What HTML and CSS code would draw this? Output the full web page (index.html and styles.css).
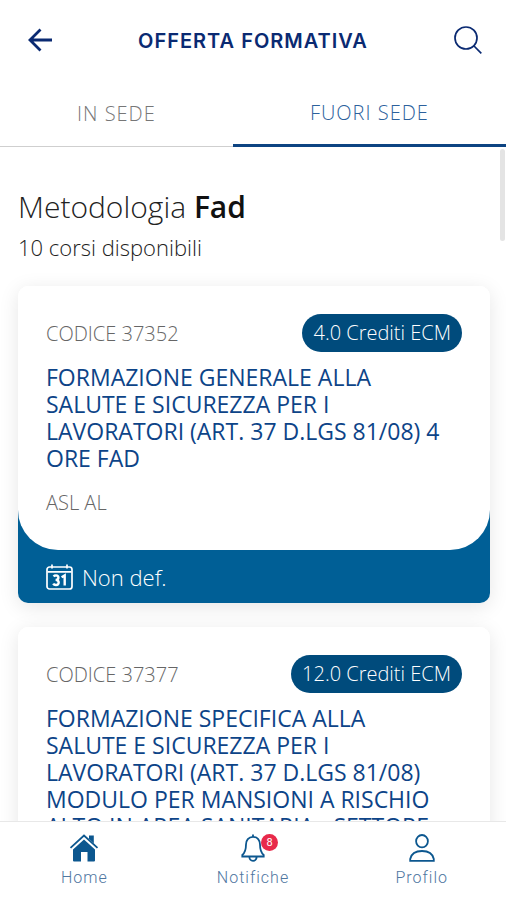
FILE: index.html
```html
<!DOCTYPE html>
<html lang="it">
<head>
    <meta charset="UTF-8">
    <meta name="viewport" content="width=device-width, initial-scale=1.0">
    <title>Offerta formativa</title>
    <link rel="stylesheet" href="styles.css">
</head>
<body>
    <header class="topbar">
        <button class="icon-btn" aria-label="Indietro">
            <svg width="28" height="28" viewBox="0 0 28 28" fill="none" stroke="currentColor" stroke-width="2.8">
                <path d="M28 14H6M16.5 3.5L6 14L16.5 24.5"/>
            </svg>
        </button>
        <h1 class="topbar-title">OFFERTA FORMATIVA</h1>
        <button class="icon-btn" aria-label="Cerca">
            <svg width="28" height="28" viewBox="0 0 28 28" fill="none" stroke="currentColor" stroke-width="1.7">
                <circle cx="12" cy="12" r="11"/>
                <path d="M19.5 19.5L27.3 27.3"/>
            </svg>
        </button>
    </header>

    <nav class="tabs">
        <a class="tab" href="#in-sede">IN SEDE</a>
        <a class="tab active" href="#fuori-sede">FUORI SEDE</a>
    </nav>

    <div class="content">
        <span class="scroll-thumb"></span>
        <main class="course-list" id="fuori-sede">
            <h2 class="list-title">Metodologia <b>Fad</b></h2>
            <p class="list-count">10 corsi disponibili</p>

            <article class="card">
                <div class="card-body">
                    <div class="card-head">
                        <span class="code">CODICE 37352</span>
                        <span class="credits">4.0 Crediti ECM</span>
                    </div>
                    <h3 class="course-title">FORMAZIONE GENERALE ALLA SALUTE E SICUREZZA PER I LAVORATORI (ART. 37 D.LGS 81/08) 4 ORE FAD</h3>
                    <p class="organizer">ASL AL</p>
                </div>
                <div class="card-footer">
                    <svg width="27" height="26" viewBox="0 0 27 26" fill="none" stroke="currentColor" stroke-width="1.7">
                        <rect x="1" y="3" width="25" height="22" rx="2.5"/>
                        <path d="M1.5 7.8H25.5M6 0.5V4.5M21 0.5V4.5"/>
                        <path d="M7.6 12.4Q8.4 11.4 10 11.4Q12.4 11.5 12.4 13.7Q12.3 15.9 9.6 15.9Q12.7 16 12.7 18.5Q12.6 21 10 21Q8 21 7.2 19.6M15.6 13.3L18.7 11.4V21.6" stroke-width="2.4"/>
                    </svg>
                    <span>Non def.</span>
                </div>
            </article>

            <article class="card">
                <div class="card-body">
                    <div class="card-head">
                        <span class="code">CODICE 37377</span>
                        <span class="credits">12.0 Crediti ECM</span>
                    </div>
                    <h3 class="course-title">FORMAZIONE SPECIFICA ALLA SALUTE E SICUREZZA PER I LAVORATORI (ART. 37 D.LGS 81/08) MODULO PER MANSIONI A RISCHIO ALTO IN AREA SANITARIA - SETTORE</h3>
                </div>
            </article>
        </main>
    </div>

    <nav class="bottom-nav">
        <a class="nav-item" href="#home">
            <svg width="30" height="28" viewBox="0 0 30 28">
                <path d="M20 1.5H24.8V11L20 7Z" fill="currentColor"/>
                <path d="M15 5.4L26 15.4V26.5Q26 27.5 25 27.5H18.5V18H12V27.5H5Q4 27.5 4 26.5V15.4Z" fill="currentColor"/>
                <path d="M1.5 14.5L15 2L28.5 14.5" fill="none" stroke="white" stroke-width="2.6"/>
                <path d="M1.5 13.8L15 1.5L28.5 13.8" fill="none" stroke="currentColor" stroke-width="1.8"/>
            </svg>
            <span>Home</span>
        </a>
        <a class="nav-item" href="#notifiche">
            <span class="bell">
                <svg width="24" height="28" viewBox="0 0 24 28" fill="none" stroke="currentColor" stroke-width="1.8">
                    <path d="M12 2.8C7.5 2.8 5 6.3 5 10.5C5 16 4.3 18.5 1.3 21V22.5H22.7V21C19.7 18.5 19 16 19 10.5C19 6.3 16.5 2.8 12 2.8ZM12 2.8V0.5M8.3 22.8Q8.6 26.8 12 26.8Q15.4 26.8 15.7 22.8"/>
                </svg>
                <span class="badge">8</span>
            </span>
            <span>Notifiche</span>
        </a>
        <a class="nav-item" href="#profilo">
            <svg width="26" height="28" viewBox="0 0 26 28" fill="none" stroke="currentColor" stroke-width="1.8">
                <ellipse cx="13" cy="7.2" rx="5.9" ry="6.2"/>
                <path d="M1.2 26.8V25C2.3 19.8 7 17 13 17S23.7 19.8 24.8 25V26.8Z"/>
            </svg>
            <span>Profilo</span>
        </a>
    </nav>
</body>
</html>
```

FILE: styles.css
```css
* {
    box-sizing: border-box;
}

body {
    margin: 0;
    height: 100vh;
    display: flex;
    flex-direction: column;
    background-color: white;
    color: #222;
    font-family: "Open Sans", "Noto Sans", sans-serif;
    font-weight: 300;
}

h1, h2, h3, p {
    margin: 0;
    font-weight: inherit;
}

a {
    text-decoration: none;
}

.topbar {
    display: flex;
    align-items: center;
    justify-content: space-between;
    height: 80px;
    padding: 0 24px;
    color: #0a2a72;
}

.icon-btn {
    display: flex;
    padding: 0;
    border: none;
    background: none;
    color: inherit;
}

.topbar-title {
    padding-top: 2px;
    font-family: Inter, sans-serif;
    font-size: 20px;
    font-weight: 600;
    letter-spacing: 1px;
}

.tabs {
    display: flex;
    height: 67px;
}

.tab {
    flex: 46;
    display: flex;
    align-items: center;
    justify-content: center;
    border-bottom: 1px solid #cfcfcf;
    color: #777;
    font-size: 20px;
    letter-spacing: 1px;
}

.tab.active {
    flex: 54;
    border-bottom: 3px solid #0d4482;
    color: #2c619c;
}

.content {
    position: relative;
    flex: 1;
    min-height: 0;
}

.scroll-thumb {
    position: absolute;
    top: 2px;
    right: 1px;
    width: 5px;
    height: 92px;
    border-radius: 3px;
    background-color: #e4e4e4;
}

.course-list {
    height: 100%;
    overflow-y: auto;
    scrollbar-width: none;
    padding: 40px 16px 24px 18px;
}

.list-title {
    font-size: 30px;
    line-height: 40px;
}

.list-title b {
    font-weight: 600;
    color: #111;
}

.list-count {
    margin-bottom: 19px;
    font-size: 22px;
    line-height: 40px;
}

.card {
    margin-bottom: 24px;
    border-radius: 10px;
    background-color: white;
    box-shadow: 0 4px 20px rgba(0, 0, 0, 0.1);
}

.card-body {
    position: relative;
    padding: 28px 28px 32px;
    border-radius: 10px 10px 40px 40px;
    background-color: white;
}

.card-head {
    display: flex;
    align-items: center;
    justify-content: space-between;
    margin-bottom: 12px;
}

.code {
    color: #666;
    font-size: 20px;
}

.credits {
    padding: 0 11px;
    border-radius: 19px;
    background-color: #004b7c;
    color: white;
    font-size: 20px;
    line-height: 38px;
}

.course-title {
    padding-right: 10px;
    color: #0d4488;
    font-size: 23px;
    font-weight: 400;
    line-height: 27px;
}

.organizer {
    margin-top: 16px;
    color: #666;
    font-size: 20px;
    line-height: 30px;
}

/* slides up under the rounded bottom of the card body */
.card-footer {
    display: flex;
    align-items: center;
    gap: 9px;
    margin-top: -40px;
    padding: 52px 28px 11px;
    border-radius: 0 0 10px 10px;
    background-color: #005f96;
    color: white;
    font-size: 22px;
    line-height: 30px;
}

.bottom-nav {
    display: flex;
    height: 79px;
    border-top: 1px solid #e8e8e8;
    background-color: white;
}

.nav-item {
    flex: 1;
    display: flex;
    flex-direction: column;
    align-items: center;
    gap: 6px;
    padding-top: 12px;
    color: #0c578f;
    font-family: Roboto, sans-serif;
    font-size: 16px;
    letter-spacing: 1px;
}

.nav-item > span:last-child {
    color: #4f769f;
}

.bell {
    position: relative;
    display: flex;
}

.badge {
    position: absolute;
    top: 0;
    left: 20px;
    width: 17px;
    border-radius: 9px;
    background-color: #e8294a;
    color: white;
    font-size: 11px;
    font-weight: 400;
    letter-spacing: 0;
    line-height: 17px;
    text-align: center;
}
```
